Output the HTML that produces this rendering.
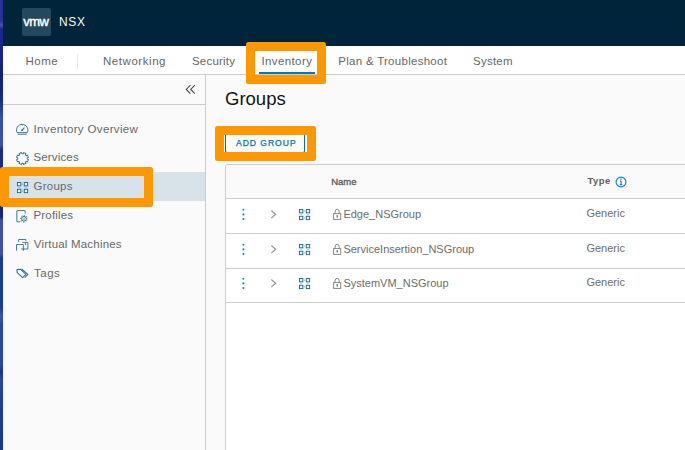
<!DOCTYPE html>
<html lang="en">
<head>
<meta charset="utf-8">
<title>NSX - Groups</title>
<style>
html,body{margin:0;padding:0;}
body{width:685px;height:450px;overflow:hidden;position:relative;background:#fafafa;
  font-family:"Liberation Sans","DejaVu Sans",sans-serif;color:#565656;}
.abs{position:absolute;}
svg{position:absolute;overflow:visible;}
#desk{left:0;top:0;width:3px;height:450px;background:linear-gradient(180deg,#2a2f9a 0px,#2a2f9a 21px,#3f55b5 25px,#1c2690 29px,#18228a 60px,#0f2080 75px,#15298c 100px,#3550b0 118px,#3a50b0 145px,#1a2a88 150px,#1a2a88 167px,#14247f 207px,#14247f 217px,#4050a8 220px,#4050a8 254px,#1c3a9a 258px,#1c3a9a 308px,#3a55b0 316px,#2a45a5 325px,#2a45a5 365px,#1c3590 372px,#2a45a5 380px,#1f3a9c 410px,#1a3595 450px);}
#hdr{left:3px;top:0;width:682px;height:46px;background:#00243a;}
#logo{left:22px;top:8px;width:29px;height:28px;background:#25495c;border-radius:2px;}
#logo span{position:absolute;left:-0.6px;top:0.1px;width:29px;line-height:28px;text-align:center;color:#fff;font-weight:normal;-webkit-text-stroke:0.4px #fff;font-size:13px;letter-spacing:-0.55px;}
#brand{left:59px;top:12px;color:#fafafa;font-size:12px;line-height:20px;letter-spacing:0.65px;}
#nav{left:3px;top:46px;width:682px;height:28px;background:#fff;border-bottom:1px solid #ccc;}
.tab{position:absolute;top:53px;font-size:11.5px;line-height:16px;color:#666;white-space:nowrap;letter-spacing:0.35px;}
#side{left:3px;top:75px;width:202px;height:375px;background:#fafafa;border-right:1px solid #ccc;}
#sidetop{left:3px;top:75px;width:202px;height:29px;border-bottom:1px solid #ccc;}
.item{position:absolute;left:33.5px;font-size:11.5px;line-height:16px;color:#686868;white-space:nowrap;letter-spacing:0.3px;}
#sel{left:3px;top:172px;width:202px;height:29px;background:#d8e3e9;}
.hl{position:absolute;border:9px solid #ff9700;border-radius:2.5px;box-sizing:border-box;}
#title{left:225px;top:87px;font-size:18.5px;line-height:24px;color:#141414;}
#btn{left:225px;top:133px;width:80px;height:20px;box-sizing:border-box;border:1px solid #0072a3;border-radius:2px;background:#fcfcfc;color:#0073a6;font-size:8.6px;font-weight:normal;-webkit-text-stroke:0.25px #0073a6;letter-spacing:0.95px;line-height:18px;text-align:center;padding-left:2.6px;}
#tbl{left:225px;top:164px;width:470px;height:300px;background:#fff;border:1px solid #ccc;border-radius:3px;box-sizing:border-box;}
#thead{left:226px;top:165px;width:459px;height:33px;background:#fafafa;border-bottom:1px solid #ccc;border-top-left-radius:2px;}
.th{position:absolute;font-size:9.5px;font-weight:bold;color:#5e5e5e;line-height:12px;white-space:nowrap;}
.rowline{position:absolute;left:226px;width:459px;height:1px;background:#ccc;}
.cell{margin-left:0.4px;position:absolute;font-size:11px;line-height:14px;color:#6c6c6c;white-space:nowrap;}
</style>
</head>
<body>
<div id="hdr" class="abs"></div>
<div id="logo" class="abs"><span>vmw</span></div>
<div id="brand" class="abs">NSX</div>
<div id="nav" class="abs"></div>
<div class="abs" style="left:77px;top:54px;width:1px;height:14px;background:#e8e8e8;"></div>
<div class="tab" style="left:25.4px;letter-spacing:0.55px;">Home</div>
<div class="tab" style="left:103px;letter-spacing:0.55px;">Networking</div>
<div class="tab" style="left:192px;letter-spacing:0.2px;">Security</div>
<div class="tab" style="left:261.4px;letter-spacing:0.4px;">Inventory</div>
<div class="abs" style="left:259px;top:72px;width:56px;height:2px;background:#0079b8;"></div>
<div class="tab" style="left:338.3px;letter-spacing:0.28px;">Plan &amp; Troubleshoot</div>
<div class="tab" style="left:473px;letter-spacing:0.25px;">System</div>

<div id="side" class="abs"></div>
<div id="sidetop" class="abs"></div>
<div id="sel" class="abs"></div>
<svg style="left:185px;top:84px;" width="11" height="11" viewBox="0 0 11 11"><path d="M5.4,1.2 L1.3,5.4 L5.4,9.6 M9.8,1.2 L5.7,5.4 L9.8,9.6" fill="none" stroke="#4a4a4a" stroke-width="1.15"/></svg>

<!-- sidebar icons -->
<svg style="left:16px;top:123px;" width="13" height="12" viewBox="0 0 13 12"><g fill="none" stroke="#2a7290" stroke-width="0.95"><path d="M1.08,9.6 A5.7,5.7 0 1 1 11.32,9.6 Z"/><path d="M1.7,11.25 H10.7" stroke-width="0.9"/><path d="M5.9,7.4 L8.4,4.7" stroke-width="1.1"/><circle cx="5.9" cy="7.4" r="0.8" fill="#2a7290" stroke="none"/><path d="M6.2,1.7 V2.7" stroke-width="0.7"/></g></svg>
<svg style="left:15.85px;top:151.8px;" width="13" height="13" viewBox="0 0 13 13"><path transform="rotate(22.5 6.5 6.5)" d="M12.43,5.32 L12.43,7.68 L11.07,7.79 L10.64,8.82 L11.53,9.86 L9.86,11.53 L8.82,10.64 L7.79,11.07 L7.68,12.43 L5.32,12.43 L5.21,11.07 L4.18,10.64 L3.14,11.53 L1.47,9.86 L2.36,8.82 L1.93,7.79 L0.57,7.68 L0.57,5.32 L1.93,5.21 L2.36,4.18 L1.47,3.14 L3.14,1.47 L4.18,2.36 L5.21,1.93 L5.32,0.57 L7.68,0.57 L7.79,1.93 L8.82,2.36 L9.86,1.47 L11.53,3.14 L10.64,4.18 L11.07,5.21Z" fill="none" stroke="#2a7290" stroke-width="0.95" stroke-linejoin="round"/></svg>
<svg class="grp" style="left:16.78px;top:181.84px;" width="12" height="12" viewBox="0 0 12 12"><g fill="#fff" fill-opacity="0.75" stroke="#1b6a8f" stroke-width="0.95"><rect x="0.48" y="0.48" width="3.35" height="3.35"/><rect x="7.28" y="0.48" width="3.35" height="3.35"/><rect x="0.48" y="7.28" width="3.35" height="3.35"/><rect x="7.28" y="7.28" width="3.35" height="3.35"/><path d="M5.2,2.15 H6 M5.2,8.95 H6 M2.15,5.2 V6 M8.95,5.2 V6" stroke-width="0.7"/></g></svg>
<svg style="left:16px;top:210px;" width="13" height="13" viewBox="0 0 13 13"><g fill="none" stroke="#2a7290" stroke-width="0.95"><path d="M4.4,11.8 H1.2 Q0.85,11.8 0.85,11.4 V1 Q0.85,0.6 1.2,0.6 H8.8 Q9.15,0.6 9.15,1 V3.4"/><circle cx="7.95" cy="8.7" r="2.35" stroke-width="0.95"/><circle cx="7.95" cy="8.7" r="3.35" stroke-width="1" stroke-dasharray="1.184 1.447" stroke-dashoffset="0.592"/><circle cx="7.95" cy="8.7" r="0.9" stroke-width="0.6" stroke="#5a93ab"/></g></svg>
<svg style="left:16px;top:239px;" width="13" height="13" viewBox="0 0 13 13"><g fill="none" stroke="#2a7290" stroke-width="0.9"><path d="M2.6,3 V0.5 H9.9 V1.9"/><path d="M0.5,11.6 V5.5 H7.3 V11.9"/><path d="M6.2,3.4 H11.9 V10 H5.3"/><path d="M9.6,3.4 V6"/></g></svg>
<svg style="left:16px;top:268px;" width="13" height="11" viewBox="0 0 13 11"><g fill="none" stroke="#2a7290" stroke-width="1.05" stroke-linejoin="round"><path d="M0.9,1.6 L1.2,4.6 L6.6,9.6 L9.9,6.4 L4.4,1.2 Z"/><path d="M5.6,0.9 L11.9,6.4 L8.8,9.6" /></g></svg>

<div class="item" style="top:121px;letter-spacing:0.35px;">Inventory Overview</div>
<div class="item" style="top:149px;letter-spacing:0.15px;">Services</div>
<div class="item" style="top:178px;letter-spacing:0.25px;">Groups</div>
<div class="item" style="top:207px;letter-spacing:0.17px;">Profiles</div>
<div class="item" style="top:236px;letter-spacing:0.2px;left:33.8px;">Virtual Machines</div>
<div class="item" style="top:265px;letter-spacing:0.5px;left:34px;">Tags</div>

<div id="title" class="abs">Groups</div>
<div id="btn" class="abs">ADD GROUP</div>

<div id="tbl" class="abs"></div>
<div id="thead" class="abs"></div>
<div class="th" style="left:331.2px;top:176px;font-weight:normal;-webkit-text-stroke:0.35px #5e5e5e;letter-spacing:0.02px;">Name</div>
<div class="th" style="left:587.5px;top:175px;letter-spacing:0.45px;">Type</div>
<svg style="left:615px;top:175.8px;" width="12" height="12" viewBox="0 0 12 12"><circle cx="6" cy="6" r="4.9" fill="none" stroke="#0f82c0" stroke-width="1.15"/><path d="M6.1,5.1 V8.5 M4.9,8.6 H7.3 M5,5.1 H6.1" stroke="#0f82c0" stroke-width="1.1" fill="none"/><circle cx="5.9" cy="3.3" r="0.8" fill="#0f82c0"/></svg>
<div class="rowline" style="top:233px;"></div>
<div class="rowline" style="top:268px;"></div>
<div class="rowline" style="top:302px;"></div>
<svg style="left:242px;top:208px;" width="3" height="12" viewBox="0 0 3 12"><g fill="#0f8ad0"><circle cx="1.4" cy="1.7" r="1.05"/><circle cx="1.4" cy="6.4" r="1.05"/><circle cx="1.4" cy="11.1" r="1.05"/></g></svg>
<svg style="left:270px;top:210px;" width="7" height="9" viewBox="0 0 7 9"><path d="M1.3,0.5 L5.6,4.3 L1.3,8.1" fill="none" stroke="#959595" stroke-width="1.2"/></svg>
<svg style="left:298.78px;top:208.54px;" width="12" height="12" viewBox="0 0 12 12"><g fill="#fff" fill-opacity="0.75" stroke="#1b6a8f" stroke-width="0.95"><rect x="0.48" y="0.48" width="3.35" height="3.35"/><rect x="7.28" y="0.48" width="3.35" height="3.35"/><rect x="0.48" y="7.28" width="3.35" height="3.35"/><rect x="7.28" y="7.28" width="3.35" height="3.35"/><path d="M5.2,2.15 H6 M5.2,8.95 H6 M2.15,5.2 V6 M8.95,5.2 V6" stroke-width="0.7"/></g></svg>
<svg style="left:332px;top:208px;" width="10" height="13" viewBox="0 0 10 13"><g fill="none" stroke="#828282" stroke-width="0.95"><rect x="1.6" y="5.6" width="7.1" height="5.8"/><path d="M3.1,5.6 V3.8 A2.05,2.5 0 0 1 7.2,3.8 V5.6"/></g><path d="M5.2,7.3 V9.7" stroke="#666" stroke-width="0.9"/><circle cx="5.2" cy="8" r="0.7" fill="#666"/></svg>
<svg style="left:242px;top:243px;" width="3" height="12" viewBox="0 0 3 12"><g fill="#0f8ad0"><circle cx="1.4" cy="1.7" r="1.05"/><circle cx="1.4" cy="6.4" r="1.05"/><circle cx="1.4" cy="11.1" r="1.05"/></g></svg>
<svg style="left:270px;top:244.6px;" width="7" height="9" viewBox="0 0 7 9"><path d="M1.3,0.5 L5.6,4.3 L1.3,8.1" fill="none" stroke="#959595" stroke-width="1.2"/></svg>
<svg style="left:298.78px;top:243.78px;" width="12" height="12" viewBox="0 0 12 12"><g fill="#fff" fill-opacity="0.75" stroke="#1b6a8f" stroke-width="0.95"><rect x="0.48" y="0.48" width="3.35" height="3.35"/><rect x="7.28" y="0.48" width="3.35" height="3.35"/><rect x="0.48" y="7.28" width="3.35" height="3.35"/><rect x="7.28" y="7.28" width="3.35" height="3.35"/><path d="M5.2,2.15 H6 M5.2,8.95 H6 M2.15,5.2 V6 M8.95,5.2 V6" stroke-width="0.7"/></g></svg>
<svg style="left:332px;top:243px;" width="10" height="13" viewBox="0 0 10 13"><g fill="none" stroke="#828282" stroke-width="0.95"><rect x="1.6" y="5.6" width="7.1" height="5.8"/><path d="M3.1,5.6 V3.8 A2.05,2.5 0 0 1 7.2,3.8 V5.6"/></g><path d="M5.2,7.3 V9.7" stroke="#666" stroke-width="0.9"/><circle cx="5.2" cy="8" r="0.7" fill="#666"/></svg>
<svg style="left:242px;top:277px;" width="3" height="12" viewBox="0 0 3 12"><g fill="#0f8ad0"><circle cx="1.4" cy="1.7" r="1.05"/><circle cx="1.4" cy="6.4" r="1.05"/><circle cx="1.4" cy="11.1" r="1.05"/></g></svg>
<svg style="left:270px;top:279.3px;" width="7" height="9" viewBox="0 0 7 9"><path d="M1.3,0.5 L5.6,4.3 L1.3,8.1" fill="none" stroke="#959595" stroke-width="1.2"/></svg>
<svg style="left:298.78px;top:278.0px;" width="12" height="12" viewBox="0 0 12 12"><g fill="#fff" fill-opacity="0.75" stroke="#1b6a8f" stroke-width="0.95"><rect x="0.48" y="0.48" width="3.35" height="3.35"/><rect x="7.28" y="0.48" width="3.35" height="3.35"/><rect x="0.48" y="7.28" width="3.35" height="3.35"/><rect x="7.28" y="7.28" width="3.35" height="3.35"/><path d="M5.2,2.15 H6 M5.2,8.95 H6 M2.15,5.2 V6 M8.95,5.2 V6" stroke-width="0.7"/></g></svg>
<svg style="left:332px;top:277px;" width="10" height="13" viewBox="0 0 10 13"><g fill="none" stroke="#828282" stroke-width="0.95"><rect x="1.6" y="5.6" width="7.1" height="5.8"/><path d="M3.1,5.6 V3.8 A2.05,2.5 0 0 1 7.2,3.8 V5.6"/></g><path d="M5.2,7.3 V9.7" stroke="#666" stroke-width="0.9"/><circle cx="5.2" cy="8" r="0.7" fill="#666"/></svg>

<div class="cell" style="left:343px;top:207px;">Edge_NSGroup</div>
<div class="cell" style="left:343px;top:242px;">ServiceInsertion_NSGroup</div>
<div class="cell" style="left:343px;top:276px;">SystemVM_NSGroup</div>
<div class="cell" style="left:586px;top:206px;">Generic</div>
<div class="cell" style="left:586px;top:241px;">Generic</div>
<div class="cell" style="left:586px;top:275px;">Generic</div>

<div class="hl" style="left:246px;top:42px;width:80px;height:42px;"></div>
<div class="hl" style="left:215px;top:126px;width:101px;height:35px;"></div>
<div id="desk" class="abs"></div>
<div class="hl" style="left:0px;top:167px;width:153px;height:40px;"></div>
</body>
</html>
